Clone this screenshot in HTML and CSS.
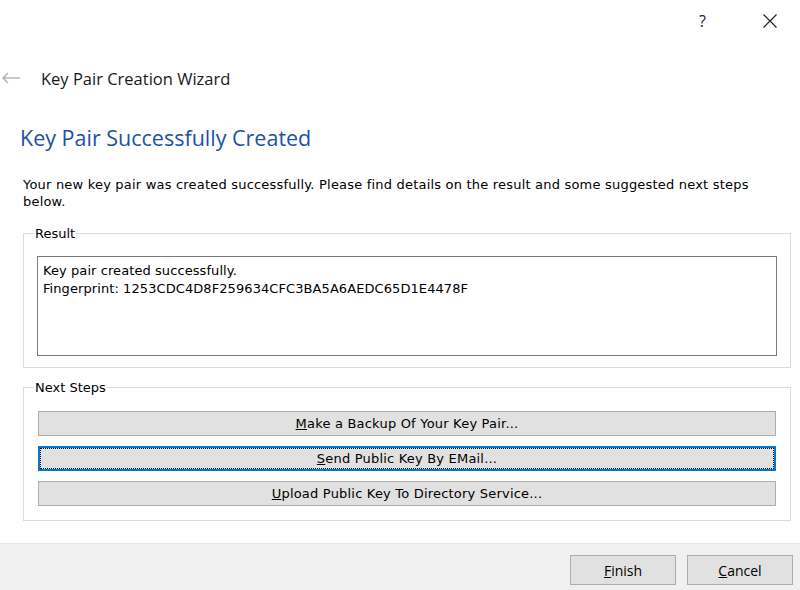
FILE: index.html
```html
<!DOCTYPE html>
<html lang="en">
<head>
  <meta charset="UTF-8" />
  <title>Key Pair Creation Wizard</title>
  <link rel="stylesheet" href="styles.css">
</head>
<body>

  <div class="title-bar">
    <span class="caption-btn help">?</span>
    <span class="caption-btn close">
      <svg width="14" height="14" viewBox="0 0 14 14"><path d="M0.5 0.5 L13.5 13.5 M13.5 0.5 L0.5 13.5" stroke="#222" stroke-width="1.1" fill="none"/></svg>
    </span>
  </div>

  <div class="wizard-header">
    <svg class="back-arrow" width="20" height="12" viewBox="0 0 20 12"><path d="M19 6 H2 M7 1 L2 6 L7 11" stroke="#b8b8b8" stroke-width="1.6" fill="none"/></svg>
    <span class="wizard-title">Key Pair Creation Wizard</span>
  </div>

  <div class="page">
    <h1>Key Pair Successfully Created</h1>
    <p class="intro">Your new key pair was created successfully. Please find details on the result and some suggested next steps below.</p>

    <fieldset class="group result">
      <legend>Result</legend>
      <div class="result-box">
        Key pair created successfully.<br>
        Fingerprint: 1253CDC4D8F259634CFC3BA5A6AEDC65D1E4478F
      </div>
    </fieldset>

    <fieldset class="group steps">
      <legend>Next Steps</legend>
      <button class="step-btn"><u>M</u>ake a Backup Of Your Key Pair...</button>
      <button class="step-btn focused"><u>S</u>end Public Key By EMail...</button>
      <button class="step-btn"><u>U</u>pload Public Key To Directory Service...</button>
    </fieldset>
  </div>

  <div class="footer">
    <button class="dlg-btn"><u>F</u>inish</button>
    <button class="dlg-btn"><u>C</u>ancel</button>
  </div>

</body>
</html>
```

FILE: styles.css
```css
body {
  margin: 0;
  background: #fff;
  font-family: Tahoma, "DejaVu Sans", Verdana, sans-serif;
  font-size: 13px;
  color: #000;
  width: 800px;
  height: 590px;
  display: flex;
  flex-direction: column;
  overflow: hidden;
}

.title-bar {
  height: 42px;
  display: flex;
  justify-content: flex-end;
  align-items: center;
  padding-right: 23px;
  gap: 57px;
}

.caption-btn {
  font-family: "Open Sans", "Noto Sans", sans-serif;
  font-size: 16px;
  color: #222;
  display: flex;
  align-items: center;
}

.wizard-header {
  height: 72px;
  display: flex;
  align-items: center;
  padding-left: 1px;
}

.back-arrow {
  margin-right: 20px;
}

.wizard-title {
  font-family: "Open Sans", "Noto Sans", sans-serif;
  font-size: 16.5px;
  color: #1a1a1a;
}

.page {
  flex: 1;
  padding: 0 9px 0 23px;
}

h1 {
  font-family: "Open Sans", "Noto Sans", sans-serif;
  font-weight: normal;
  font-size: 21.5px;
  color: #1c52a3;
  margin: 9px 0 0 -3px;
  line-height: 30px;
}

.intro {
  margin: 23px 0 16px;
  line-height: 17px;
  letter-spacing: 0.2px;
}

.group {
  margin: 0;
  border: 1px solid #dcdcdc;
  padding: 15px 13px 11px 13px;
}

.group legend {
  padding: 0 1px;
  margin-left: -3px;
}

.result-box {
  height: 88px;
  border: 1px solid #7a7a7a;
  padding: 5px 5px;
  line-height: 18px;
  letter-spacing: 0.08px;
}

.steps {
  margin-top: 12px;
  padding: 16px 14px 14px 14px;
  display: flex;
  flex-direction: column;
  gap: 10px;
}

.steps legend {
  margin-left: -4px;
}

.step-btn {
  height: 25px;
  background: #e1e1e1;
  border: 1px solid #adadad;
  font-family: inherit;
  font-size: 13px;
  letter-spacing: 0.2px;
  color: #000;
  padding: 0;
}

.step-btn.focused {
  border: 2px solid #0078d7;
  outline: 1px dotted #000;
  outline-offset: -3px;
}

.footer {
  height: 46px;
  background: #f0f0f0;
  border-top: 1px solid #e6e6e6;
  display: flex;
  justify-content: flex-end;
  gap: 11px;
  padding-right: 7px;
}

.dlg-btn {
  width: 106px;
  height: 30px;
  background: #e1e1e1;
  border: 1px solid #adadad;
  font-family: "Open Sans", "Noto Sans", sans-serif;
  font-size: 14px;
  color: #000;
  margin-top: 11px;
}
```
